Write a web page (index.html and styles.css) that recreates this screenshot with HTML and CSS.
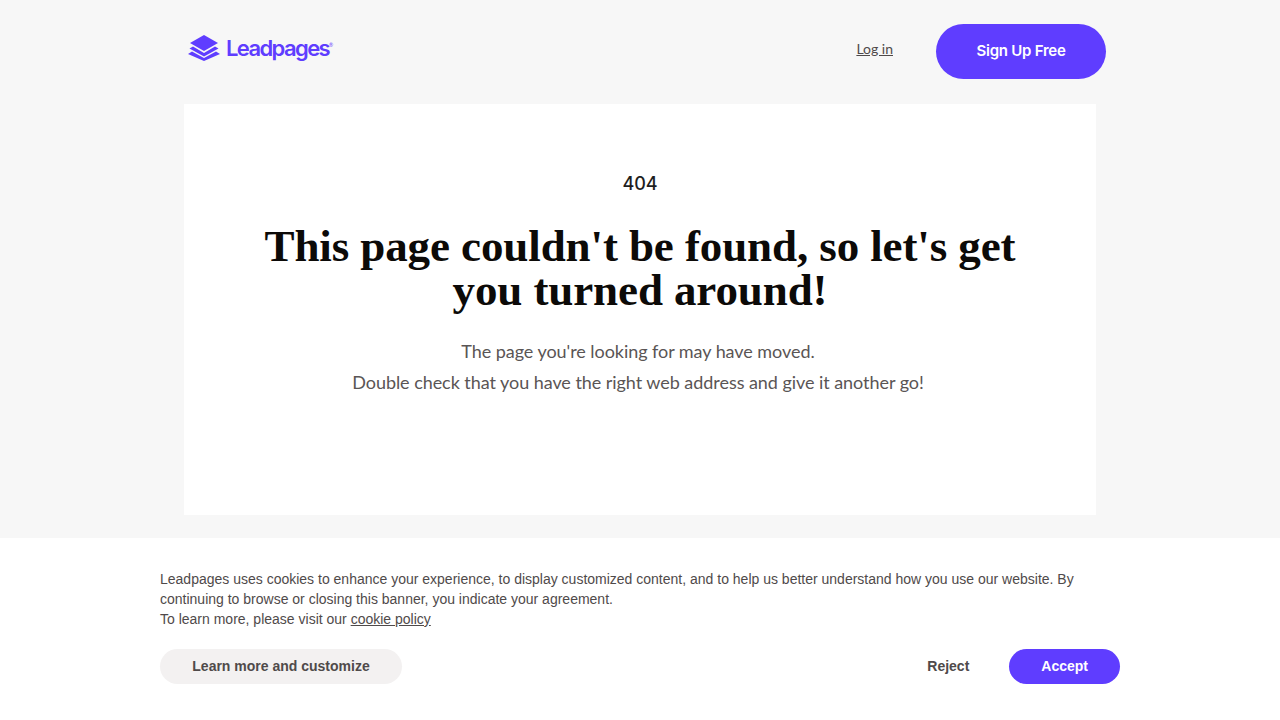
FILE: index.html
```html
<!DOCTYPE html>
<html lang="en">

<head>
    <meta charset="UTF-8">
    <meta name="viewport" content="width=device-width, initial-scale=1.0">
    <title>Page not found</title>
    <link rel="stylesheet" href="styles.css">
</head>

<body>
    <div class="wrap">
        <header class="top">
            <a class="logo" href="#">
                <svg class="logo-icon" width="32" height="26" viewBox="0 0 32 26">
                    <path d="M16 0 L30 8 L16 16 L2 8 Z" fill="#5f3dff" />
                    <path d="M5 11.500 L16 18 L27 11.500 L30.500 13.500 L16 21.500 L1.500 13.500 Z" fill="#5f3dff" />
                    <path d="M4 16.500 L16 23 L28 16.500 L32 19 L16 26 L0 19 Z" fill="#5f3dff" />
                </svg>
                <span class="logo-text">Leadpages</span><span class="logo-mark">®</span>
            </a>
            <nav class="top-nav">
                <a class="login" href="#">Log in</a>
                <a class="signup" href="#">Sign Up Free</a>
            </nav>
        </header>
        <main class="card">
            <p class="code">404</p>
            <h1>This page couldn't be found, so let's get you turned around!</h1>
            <div class="texts">
                <p class="text">The page you're looking for may have moved.</p>
                <p class="text">Double check that you have the right web address and give it another go!</p>
            </div>
        </main>
    </div>

    <div class="cookie">
        <div class="cookie-inner">
            <p class="cookie-text">Leadpages uses cookies to enhance your experience, to display customized content, and to help us better understand how you use our website. By continuing to browse or closing this banner, you indicate your agreement.<br>To learn more, please visit our <a href="#">cookie policy</a></p>
            <div class="cookie-btns">
                <button class="btn btn-grey">Learn more and customize</button>
                <div class="cookie-right">
                    <button class="btn btn-plain">Reject</button>
                    <button class="btn btn-purple">Accept</button>
                </div>
            </div>
        </div>
    </div>
</body>

</html>
```

FILE: styles.css
```css
* {
    margin: 0;
    padding: 0;
    box-sizing: border-box;
}

body {
    background-color: #f7f7f7;
    font-family: "Lato", "Liberation Sans", sans-serif;
    height: 720px;
    overflow: hidden;
}

.wrap {
    width: 912px;
    margin: 0 auto;
}

.top {
    height: 104px;
    display: flex;
    justify-content: space-between;
    align-items: flex-start;
    padding-top: 24px;
}

.logo {
    display: flex;
    align-items: center;
    height: 48px;
    padding-left: 4px;
    text-decoration: none;
    color: #5f3dff;
}

.logo-icon {
    margin-right: 6px;
}

.logo-text {
    font-family: "Inter", sans-serif;
    font-size: 22px;
    font-weight: 600;
    letter-spacing: -1.600px;
}

.logo-mark {
    font-size: 5px;
    margin-bottom: 6px;
}

.top-nav {
    display: flex;
    align-items: center;
    gap: 43px;
    margin-right: -10px;
}

.login {
    font-size: 14px;
    color: #4f4a4a;
    margin-top: -6px;
}

.signup {
    width: 170px;
    height: 55px;
    line-height: 54px;
    text-align: center;
    border-radius: 28px;
    background-color: #5f3dff;
    color: #fff;
    font-family: "Inter", sans-serif;
    font-size: 15px;
    font-weight: 600;
    letter-spacing: -0.250px;
    text-decoration: none;
}

.card {
    height: 411px;
    background-color: #fff;
    padding-top: 69px;
    text-align: center;
}

.code {
    font-family: "Inter", sans-serif;
    font-size: 18px;
    font-weight: 500;
    line-height: 22px;
    color: #1e1e1e;
    margin-bottom: 29px;
}

h1 {
    font-family: "Liberation Serif", serif;
    font-size: 45px;
    line-height: 44px;
    font-weight: 700;
    letter-spacing: -0.100px;
    color: #0c0a08;
    width: 790px;
    margin: 0 auto 24px;
}

.texts {
    padding-right: 4px;
}

.text {
    font-size: 18px;
    line-height: 31px;
    letter-spacing: -0.050px;
    color: #5a5555;
}

.cookie {
    position: fixed;
    left: 0;
    right: 0;
    bottom: 0;
    height: 182px;
    background-color: #fff;
    font-family: "Liberation Sans", sans-serif;
}

.cookie-inner {
    width: 960px;
    margin: 0 auto;
    padding-top: 31px;
}

.cookie-text {
    font-size: 14px;
    line-height: 20px;
    color: #4f4a4a;
}

.cookie-text a {
    color: #4f4a4a;
}

.cookie-btns {
    display: flex;
    justify-content: space-between;
    margin-top: 20px;
}

.cookie-right {
    display: flex;
    gap: 8px;
}

.btn {
    height: 35px;
    border: none;
    border-radius: 18px;
    padding: 0 32px 2px;
    font-family: "Liberation Sans", sans-serif;
    font-size: 14px;
    font-weight: 700;
    color: #4f4a4a;
    background: none;
}

.btn-grey {
    background-color: #f3f1f1;
    width: 242px;
}

.btn-purple {
    background-color: #5f3dff;
    color: #fff;
}
```
